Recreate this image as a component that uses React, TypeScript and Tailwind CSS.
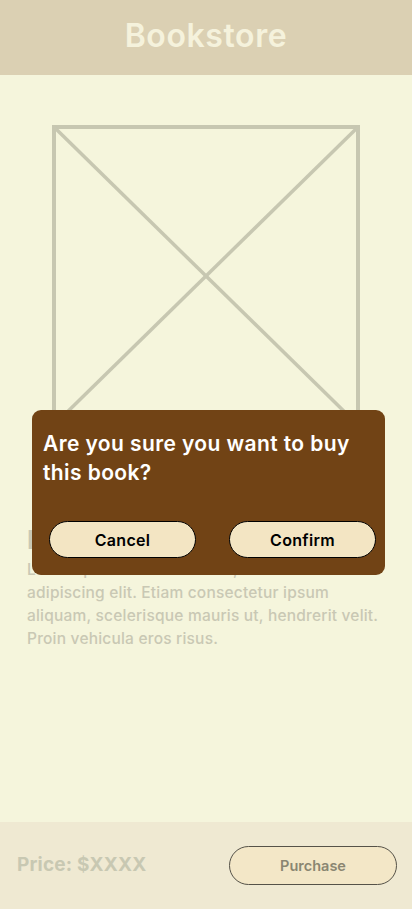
import React from 'react';

const font = { fontFamily: 'Inter, "Noto Sans", sans-serif' };

const lines = [
  'Lorem ipsum dolor sit amet, consectetur',
  'adipiscing elit. Etiam consectetur ipsum',
  'aliquam, scelerisque mauris ut, hendrerit velit.',
  'Proin vehicula eros risus.',
];

export default function App() {
  return (
    <div className="relative min-h-[909px] w-[412px] bg-[#f5f5dc] flex flex-col" style={font}>
      {/* Header */}
      <header className="h-[75px] bg-[#dbd0b3] flex items-center justify-center">
        <h1 className="text-[32px] leading-[40px] -mt-[4px] font-semibold text-[#f5f2dc] tracking-[0.6px]">Bookstore</h1>
      </header>

      {/* Main */}
      <main className="flex-1 flex flex-col">
        <div className="mt-[50px] mx-auto w-[308px] h-[302px]">
          <svg width="308" height="302" viewBox="0 0 308 302" fill="none">
            <rect x="2" y="2" width="304" height="298" stroke="#c7c7b1" strokeWidth="4" />
            <line x1="2" y1="2" x2="306" y2="300" stroke="#c7c7b1" strokeWidth="3.5" />
            <line x1="306" y1="2" x2="2" y2="300" stroke="#c7c7b1" strokeWidth="3.5" />
          </svg>
        </div>

        <div className="pl-[27px] pr-[10px] mt-[95px]">
          <h2 className="text-[26px] leading-[36px] font-bold text-[#c9c8b4]">Product Name</h2>
          <p className="text-[15.5px] leading-[23px] tracking-[0.2px] text-[#c9c8b4] font-medium">
            {lines.map((l) => (
              <span key={l} className="block whitespace-nowrap">{l}</span>
            ))}
          </p>
        </div>
      </main>

      {/* Footer */}
      <footer className="h-[87px] bg-[#efe9d2] flex items-center justify-between pl-[17px] pr-[15px]">
        <span className="text-[19px] font-bold text-[#c8c8b2] tracking-[0.2px]">Price: $XXXX</span>
        <button className="w-[168px] h-[39px] rounded-full border border-[#555248] bg-[#f3e7c7] text-[14.5px] font-semibold text-[#8a8672]">
          Purchase
        </button>
      </footer>

      {/* Confirm dialog */}
      <div className="absolute left-[32px] top-[410px] w-[353px] h-[165px] rounded-[9px] bg-[#714315] flex flex-col">
        <p className="pt-[19px] pl-[11px] pr-[20px] text-[21px] leading-[29px] tracking-[0.4px] font-semibold text-white">
          Are you sure you want to buy this book?
        </p>
        <div className="mt-auto mb-[17px] pl-[17px] flex gap-[33px]">
          <button className="w-[147px] h-[37px] rounded-full border border-black bg-[#f3e5c3] text-[16px] tracking-[0.3px] font-semibold text-black">
            Cancel
          </button>
          <button className="w-[147px] h-[37px] rounded-full border border-black bg-[#f3e5c3] text-[16px] tracking-[0.3px] font-semibold text-black">
            Confirm
          </button>
        </div>
      </div>
    </div>
  );
}
